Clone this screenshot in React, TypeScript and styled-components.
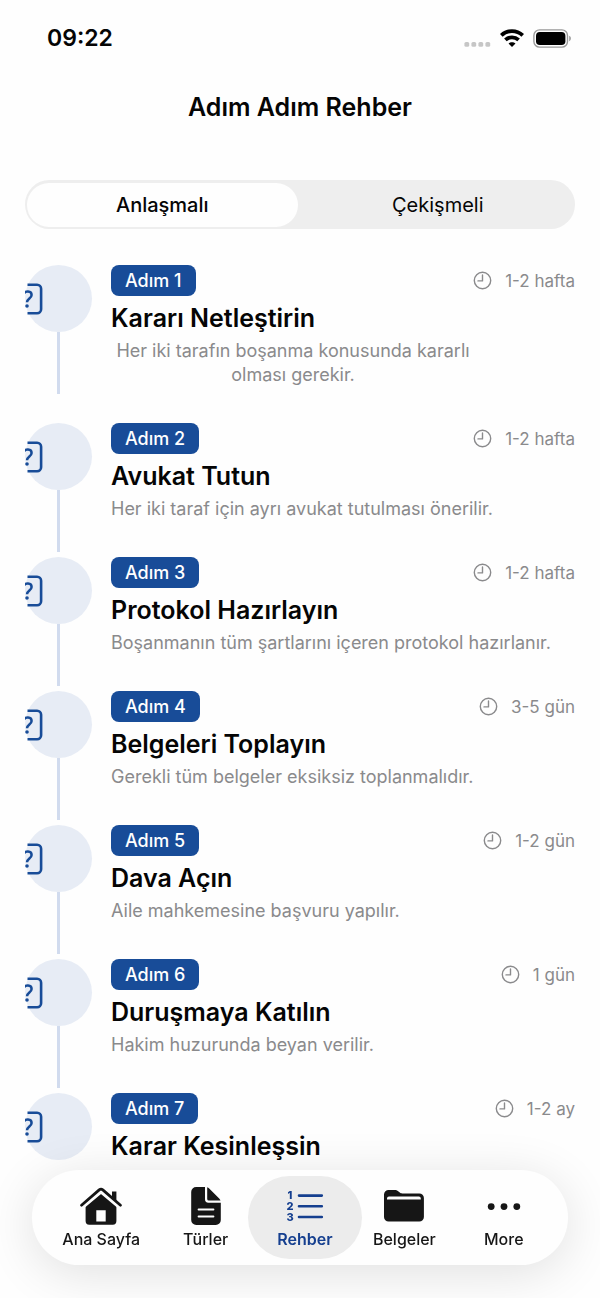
import React, { useState } from "react";
import styled, { createGlobalStyle } from "styled-components";

const GlobalStyle = createGlobalStyle`
  *, *::before, *::after { box-sizing: border-box; }
  body {
    margin: 0;
    background: #fefefe;
    color: #050505;
    font-family: Inter, "Liberation Sans", sans-serif;
    -webkit-font-smoothing: antialiased;
  }
`;

const Screen = styled.div`
  display: flex;
  flex-direction: column;
  min-height: 100vh;
`;

const StatusBar = styled.div`
  display: flex;
  align-items: center;
  justify-content: space-between;
  height: 76px;
  padding: 0 28px 0 47px;
`;

const Time = styled.time`
  font-size: 23px;
  line-height: 28px;
  font-weight: 600;
`;

const StatusIcons = styled.div`
  display: flex;
  align-items: center;
  gap: 9px;
`;

const Header = styled.header`
  display: flex;
  align-items: center;
  justify-content: center;
  height: 62px;
`;

const Title = styled.h1`
  margin: 0;
  font-size: 25px;
  line-height: 32px;
  font-weight: 600;
`;

const Segments = styled.div`
  display: flex;
  gap: 5px;
  height: 49px;
  margin: 42px 25px 36px;
  padding: 3px 2px 2px;
  border-radius: 25px;
  background: #eeeeee;
`;

const Segment = styled.button<{ $active: boolean }>`
  flex: 1;
  border: 0;
  border-radius: 23px;
  padding: 0;
  background: ${(p) => (p.$active ? "#fefefe" : "transparent")};
  color: inherit;
  font-family: inherit;
  font-size: 20px;
  line-height: 24px;
  font-weight: ${(p) => (p.$active ? 500 : 400)};
`;

const StepList = styled.ol`
  margin: 0;
  padding: 0 25px;
  list-style: none;
`;

const StepItem = styled.li`
  display: flex;
  align-items: flex-start;
  gap: 19px;
`;

const Rail = styled.div`
  display: flex;
  flex-direction: column;
  align-items: center;
  flex: none;
  width: 67px;
`;

const StepCircle = styled.div`
  display: flex;
  align-items: center;
  width: 67px;
  height: 67px;
  border-radius: 50%;
  background: #e7ecf5;
`;

const RailLine = styled.div`
  width: 3px;
  height: 62px;
  background: #d1dbee;
`;

const StepBody = styled.div`
  flex: 1;
  min-width: 0;
  padding-bottom: 36px;
`;

const StepTop = styled.div`
  display: flex;
  align-items: center;
  justify-content: space-between;
`;

const Badge = styled.span`
  padding: 0 14px;
  border-radius: 8px;
  background: #184c98;
  color: #ffffff;
  font-size: 18px;
  line-height: 31px;
  font-weight: 500;
`;

const Duration = styled.span`
  display: flex;
  align-items: center;
  gap: 13px;
  color: #8a8a8c;
  font-size: 17px;
  line-height: 24px;
`;

const StepTitle = styled.h2`
  margin: 4px 0 3px;
  font-size: 25px;
  line-height: 36px;
  font-weight: 600;
`;

const StepText = styled.p<{ $centered?: boolean }>`
  margin: 0;
  max-width: ${(p) => (p.$centered ? "364px" : "none")};
  text-align: ${(p) => (p.$centered ? "center" : "left")};
  color: #8a8a8c;
  font-size: 18px;
  line-height: 24px;
`;

const TabBar = styled.nav`
  position: fixed;
  left: 32px;
  right: 32px;
  bottom: 33px;
  display: grid;
  grid-template-columns:
    minmax(0, 21fr) minmax(0, 21fr) minmax(0, 19fr) minmax(0, 21fr) minmax(0, 19fr);
  padding: 6px 17px;
  border-radius: 48px;
  background: #fefefe;
  box-shadow: 0 8px 50px rgba(0, 0, 0, 0.12);
`;

const TabLink = styled.a<{ $active: boolean }>`
  display: flex;
  flex-direction: column;
  align-items: center;
  justify-self: center;
  gap: 3px;
  width: 114px;
  height: 83px;
  padding-top: 10px;
  border-radius: 42px;
  background: ${(p) => (p.$active ? "#ececec" : "transparent")};
  color: ${(p) => (p.$active ? "#153f8f" : "#161616")};
  font-size: 16px;
  line-height: 20px;
  font-weight: ${(p) => (p.$active ? 600 : 500)};
  text-decoration: none;
  white-space: nowrap;
`;

const SignalDots = () => (
  <svg width="27" height="18" viewBox="0 0 27 18" fill="#c6c6c6" aria-hidden="true">
    {[0, 7, 14, 21].map((x) => (
      <rect key={x} x={x + 0.4} y="13" width="4.8" height="4.8" rx="1.6" />
    ))}
  </svg>
);

const WifiIcon = () => (
  <svg width="24" height="18" viewBox="0 0 24 18" fill="none" stroke="#000" strokeWidth="3.8" aria-hidden="true">
    <path d="M1.3 6.3C7.3.6 16.7.6 22.7 6.3" />
    <path d="M5.4 10.9c3.8-3.5 9.4-3.5 13.2 0" />
    <path d="M12 18 8.5 14.6c1.9-1.7 5.1-1.7 7 0Z" fill="#000" stroke="none" />
  </svg>
);

const BatteryIcon = () => (
  <svg width="39" height="19" viewBox="0 0 39 19" aria-hidden="true">
    <rect x="0.9" y="0.9" width="33.6" height="17.2" rx="5.6" fill="none" stroke="#999" strokeWidth="1.4" />
    <rect x="3" y="3" width="29.4" height="13" rx="3.8" fill="#000" />
    <path d="M36.2 6.8c2.2.8 2.2 4.6 0 5.4Z" fill="#999" />
  </svg>
);

const QuestionIcon = () => (
  <svg width="18" height="32" viewBox="0 0 18 32" fill="none" stroke="#184c98" aria-hidden="true">
    <path d="M2.5 1.8h9.6a4 4 0 0 1 4 4v20.4a4 4 0 0 1-4 4H2.5" strokeWidth="2.6" />
    <path d="M-1 10.6C-.2 7.9 6.6 7.4 6.6 11.9c0 3.6-4.6 3.5-4.6 7.4" strokeWidth="2.5" />
    <circle cx="2" cy="23" r="1.8" fill="#184c98" stroke="none" />
  </svg>
);

const ClockIcon = () => (
  <svg width="19" height="19" viewBox="0 0 19 19" fill="none" stroke="#8a8a8c" strokeWidth="1.4" strokeLinecap="round" aria-hidden="true">
    <circle cx="9.5" cy="9.5" r="8.2" />
    <path d="M9.5 4v5.9H5" strokeLinejoin="round" />
  </svg>
);

const HomeIcon = () => (
  <svg width="44" height="40" viewBox="0 0 44 40" aria-hidden="true">
    <path d="M6.6 19.3 22 6.6l15.4 12.7v15.8a3.6 3.6 0 0 1-3.6 3.6H10.2a3.6 3.6 0 0 1-3.6-3.6Zm10.7 4.9v11.3h9.4V24.2Z" fill="currentColor" fillRule="evenodd" />
    <path d="M4.4 21.4 22 6.7l17.6 14.7" fill="none" stroke="#fefefe" strokeWidth="2" />
    <path d="M33 5.5h4.4v10.6L33 12.4Z" fill="currentColor" />
    <path d="M2.5 19.2 20.2 3.9a2.8 2.8 0 0 1 3.6 0l17.7 15.3" fill="none" stroke="currentColor" strokeWidth="2.8" strokeLinecap="round" />
  </svg>
);

const DocumentIcon = () => (
  <svg width="30" height="40" viewBox="0 0 30 40" aria-hidden="true">
    <path d="M14 1v12.3a3.4 3.4 0 0 0 3.4 3.4h12.4v17.2a5 5 0 0 1-5 5H5.2a5 5 0 0 1-5-5V6a5 5 0 0 1 5-5Z" fill="currentColor" />
    <path d="M16.2 1.2c.8.2 1.4.7 2 1.3l10 10c.6.6 1 1.2 1.3 2.1H17.8a1.6 1.6 0 0 1-1.6-1.6Z" fill="currentColor" />
    <path d="M7.6 23.6h14.8M7.6 30.4h14.8" stroke="#fefefe" strokeWidth="2" strokeLinecap="round" />
  </svg>
);

const ListIcon = () => (
  <svg width="38" height="40" viewBox="0 0 38 40" fill="currentColor" aria-hidden="true">
    <g fontFamily="Inter, sans-serif" fontSize="11" fontWeight="800" textAnchor="middle">
      <text x="4" y="13">1</text>
      <text x="4" y="24">2</text>
      <text x="4" y="35">3</text>
    </g>
    <path d="M13 9.6h22.8M13 20.3h22.8M13 31h22.8" stroke="currentColor" strokeWidth="2.6" strokeLinecap="round" />
  </svg>
);

const FolderIcon = () => (
  <svg width="40" height="40" viewBox="0 0 40 40" aria-hidden="true">
    <path d="M0 8.5A4.6 4.6 0 0 1 4.6 4h6.2c1.7 0 2.8.6 4 1.7l1 .9c.8.7 1.4.9 2.5.9h17a4.6 4.6 0 0 1 4.6 4.6V31a4.6 4.6 0 0 1-4.6 4.6H4.6A4.6 4.6 0 0 1 0 31Z" fill="currentColor" />
    <path d="M3 13.4v-.8a2 2 0 0 1 2-2h29.8a2 2 0 0 1 2 2v.8Z" fill="#fefefe" />
  </svg>
);

const MoreIcon = () => (
  <svg width="34" height="40" viewBox="0 0 34 40" fill="currentColor" aria-hidden="true">
    <circle cx="4.2" cy="20.6" r="3.4" />
    <circle cx="17" cy="20.6" r="3.4" />
    <circle cx="29.8" cy="20.6" r="3.4" />
  </svg>
);

interface Step {
  title: string;
  duration: string;
  text?: string;
  centered?: boolean;
}

const steps: Step[] = [
  {
    title: "Kararı Netleştirin",
    duration: "1-2 hafta",
    text: "Her iki tarafın boşanma konusunda kararlı olması gerekir.",
    centered: true,
  },
  { title: "Avukat Tutun", duration: "1-2 hafta", text: "Her iki taraf için ayrı avukat tutulması önerilir." },
  { title: "Protokol Hazırlayın", duration: "1-2 hafta", text: "Boşanmanın tüm şartlarını içeren protokol hazırlanır." },
  { title: "Belgeleri Toplayın", duration: "3-5 gün", text: "Gerekli tüm belgeler eksiksiz toplanmalıdır." },
  { title: "Dava Açın", duration: "1-2 gün", text: "Aile mahkemesine başvuru yapılır." },
  { title: "Duruşmaya Katılın", duration: "1 gün", text: "Hakim huzurunda beyan verilir." },
  { title: "Karar Kesinleşsin", duration: "1-2 ay" },
];

const tabs = [
  { label: "Ana Sayfa", href: "#ana-sayfa", Icon: HomeIcon },
  { label: "Türler", href: "#turler", Icon: DocumentIcon },
  { label: "Rehber", href: "#rehber", Icon: ListIcon },
  { label: "Belgeler", href: "#belgeler", Icon: FolderIcon },
  { label: "More", href: "#more", Icon: MoreIcon },
];

const segments = ["Anlaşmalı", "Çekişmeli"];

export default function App() {
  const [segment, setSegment] = useState(segments[0]);

  return (
    <Screen>
      <GlobalStyle />
      <StatusBar>
        <Time>09:22</Time>
        <StatusIcons>
          <SignalDots />
          <WifiIcon />
          <BatteryIcon />
        </StatusIcons>
      </StatusBar>
      <Header>
        <Title>Adım Adım Rehber</Title>
      </Header>
      <main>
        <Segments role="tablist">
          {segments.map((name) => (
            <Segment
              key={name}
              type="button"
              role="tab"
              aria-selected={segment === name}
              $active={segment === name}
              onClick={() => setSegment(name)}
            >
              {name}
            </Segment>
          ))}
        </Segments>
        <StepList>
          {steps.map((step, i) => (
            <StepItem key={step.title}>
              <Rail>
                <StepCircle>
                  <QuestionIcon />
                </StepCircle>
                {i < steps.length - 1 && <RailLine />}
              </Rail>
              <StepBody>
                <StepTop>
                  <Badge>Adım {i + 1}</Badge>
                  <Duration>
                    <ClockIcon />
                    {step.duration}
                  </Duration>
                </StepTop>
                <StepTitle>{step.title}</StepTitle>
                {step.text && <StepText $centered={step.centered}>{step.text}</StepText>}
              </StepBody>
            </StepItem>
          ))}
        </StepList>
      </main>
      <TabBar>
        {tabs.map(({ label, href, Icon }) => (
          <TabLink key={label} href={href} $active={label === "Rehber"} aria-current={label === "Rehber" ? "page" : undefined}>
            <Icon />
            {label}
          </TabLink>
        ))}
      </TabBar>
    </Screen>
  );
}
